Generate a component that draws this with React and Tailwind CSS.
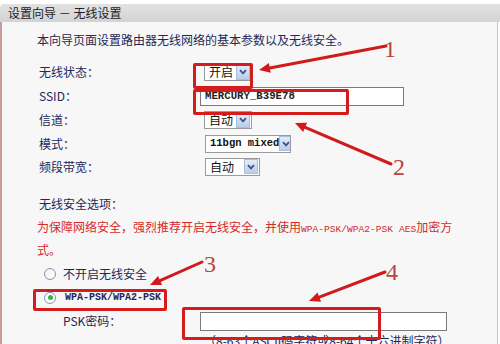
const cjk = { fontFamily: '"Noto Sans CJK SC", "Noto Sans", sans-serif' };
const mono = { fontFamily: '"Liberation Mono", "DejaVu Sans Mono", monospace' };

function DropBtn() {
  return (
    <span className="ml-auto flex h-[15px] w-[14px] shrink-0 items-center justify-center border border-[#a9bde0] bg-gradient-to-b from-[#e3ebf8] to-[#bccde9]">
      <svg width="8" height="6" viewBox="0 0 8 6">
        <path d="M1 1.2 L4 4.4 L7 1.2" fill="none" stroke="#3c5684" strokeWidth="1.8" />
      </svg>
    </span>
  );
}

function Select({ value, width, isMono }) {
  return (
    <div
      className="flex h-[18px] shrink-0 items-center overflow-hidden border border-[#9a9a9a] bg-white pl-[4px] pr-[1px] text-[12px] text-[#111]"
      style={{ width }}
    >
      <span className={`whitespace-nowrap ${isMono ? 'text-[10.5px] font-bold' : ''}`} style={isMono ? mono : cjk}>
        {value}
      </span>
      <DropBtn />
    </div>
  );
}

function Row({ label, h, children }) {
  return (
    <div className="flex items-center" style={{ height: h }}>
      <div className="w-[165px] shrink-0 pl-[37px] text-[12px] text-[#1f2856]" style={cjk}>
        {label}
      </div>
      {children}
    </div>
  );
}

function Arrow({ x1, y1, x2, y2 }) {
  const a = Math.atan2(y2 - y1, x2 - x1);
  const len = 11;
  const w = 5;
  const bx = x2 - len * Math.cos(a);
  const by = y2 - len * Math.sin(a);
  const px = -Math.sin(a) * w;
  const py = Math.cos(a) * w;
  return (
    <g>
      <line x1={x1} y1={y1} x2={bx} y2={by} stroke="#cf1b1b" strokeWidth="3" strokeLinecap="round" />
      <polygon points={`${x2},${y2} ${bx + px},${by + py} ${bx - px},${by - py}`} fill="#cf1b1b" />
    </g>
  );
}

export default function App() {
  return (
    <div className="relative h-[344px] w-[500px] overflow-hidden bg-white">
      <div className="flex h-full flex-col pt-[4px]">
        <div
          className="flex h-[23px] items-center rounded-tl-[4px] bg-gradient-to-b from-[#e2e2e2] to-[#d3d3d3] pl-[8px] text-[12px] text-[#222]"
          style={cjk}
        >
          设置向导 － 无线设置
        </div>
        <div className="mr-[2px] flex-1 border-l-2 border-r border-l-[#c99a9a] border-r-[#dcbcbc] bg-[#f7f7f7] pt-[8px]">
          <div className="flex h-[20px] items-center pl-[35px] text-[12px] text-[#1f2856]" style={cjk}>
            本向导页面设置路由器无线网络的基本参数以及无线安全。
          </div>
          <div className="mt-[10px]">
            <Row label="无线状态：" h="24px">
              <div className="ml-[37px]">
                <Select value="开启" width="48px" />
              </div>
            </Row>
            <Row label="SSID：" h="24px">
              <div
                className="ml-[33px] flex h-[19px] w-[204px] items-center border border-[#7a7a7a] bg-white pl-[4px] text-[10.7px] font-bold text-[#222]"
                style={mono}
              >
                MERCURY_B39E78
              </div>
            </Row>
            <Row label="信道：" h="24px">
              <div className="ml-[37px]">
                <Select value="自动" width="48px" />
              </div>
            </Row>
            <Row label="模式：" h="23px">
              <div className="ml-[38px]">
                <Select value="11bgn mixed" width="86px" isMono />
              </div>
            </Row>
            <Row label="频段带宽：" h="23px">
              <div className="ml-[38px]">
                <Select value="自动" width="55px" />
              </div>
            </Row>
          </div>
          <div className="mt-[16px] flex h-[20px] items-center pl-[37px] text-[12px] text-[#1f2856]" style={cjk}>
            无线安全选项：
          </div>
          <div className="mt-[3px] pl-[35px] text-[12px] leading-[20px] text-[#d42a2a]" style={cjk}>
            为保障网络安全，强烈推荐开启无线安全，并使用
            <span className="text-[9.6px]" style={mono}>WPA-PSK/WPA2-PSK AES</span>
            加密方
            <br />
            式。
          </div>
          <div className="mt-[2px] flex h-[24px] items-center pl-[42px]">
            <span className="h-[12px] w-[12px] rounded-full border border-[#8496b0] bg-gradient-to-br from-[#eef1f6] to-white" />
            <span className="ml-[7px] text-[12px] text-[#1f2856]" style={cjk}>
              不开启无线安全
            </span>
          </div>
          <div className="flex h-[23px] items-center pl-[42px]">
            <span className="flex h-[12px] w-[12px] items-center justify-center rounded-full border border-[#8496b0] bg-white">
              <span className="h-[5px] w-[5px] rounded-full bg-[#3dad4a]" />
            </span>
            <span className="ml-[9px] text-[10px] font-bold text-[#1f2856]" style={mono}>
              WPA-PSK/WPA2-PSK
            </span>
          </div>
          <div className="flex h-[24px] items-center">
            <div className="w-[165px] shrink-0 pl-[61px] text-[12px] text-[#1f2856]" style={cjk}>
              PSK密码：
            </div>
            <div className="ml-[33px] h-[19px] w-[247px] border border-[#7a7a7a] bg-white" />
          </div>
          <div className="mt-[1px] whitespace-nowrap pl-[202px] text-[12px] leading-[14px] text-[#1f2856]" style={cjk}>
            （8-63个ASCII码字符或8-64个十六进制字符）
          </div>
        </div>
      </div>

      {/* red annotation boxes */}
      <div className="absolute left-[193px] top-[63px] h-[26px] w-[60px] rounded-[2px] border-[3px] border-[#d41c1c]" />
      <div className="absolute left-[193px] top-[89px] h-[26px] w-[156px] rounded-[2px] border-[3px] border-[#d41c1c]" />
      <div className="absolute left-[33px] top-[289px] h-[22px] w-[134px] rounded-[2px] border-[3px] border-[#d41c1c]" />
      <div className="absolute left-[182px] top-[307px] h-[33px] w-[199px] rounded-[2px] border-[3px] border-[#d41c1c]" />

      <svg className="absolute left-0 top-0" width="500" height="344">
        <Arrow x1={386} y1={46} x2={259} y2={70} />
        <Arrow x1={391} y1={164} x2={295} y2={123} />
        <Arrow x1={202} y1={262} x2={150} y2={285} />
        <Arrow x1={385} y1={272} x2={309} y2={301} />
      </svg>

      {['1', '2', '3', '4'].map((n, i) => {
        const pos = [
          'left-[384px] top-[37px]',
          'left-[393px] top-[155px]',
          'left-[204px] top-[252px]',
          'left-[386px] top-[260px]',
        ][i];
        return (
          <span
            key={n}
            className={`absolute text-[24px] leading-[25px] text-[#b84444] ${pos}`}
            style={{ fontFamily: '"Liberation Serif", serif' }}
          >
            {n}
          </span>
        );
      })}
    </div>
  );
}
